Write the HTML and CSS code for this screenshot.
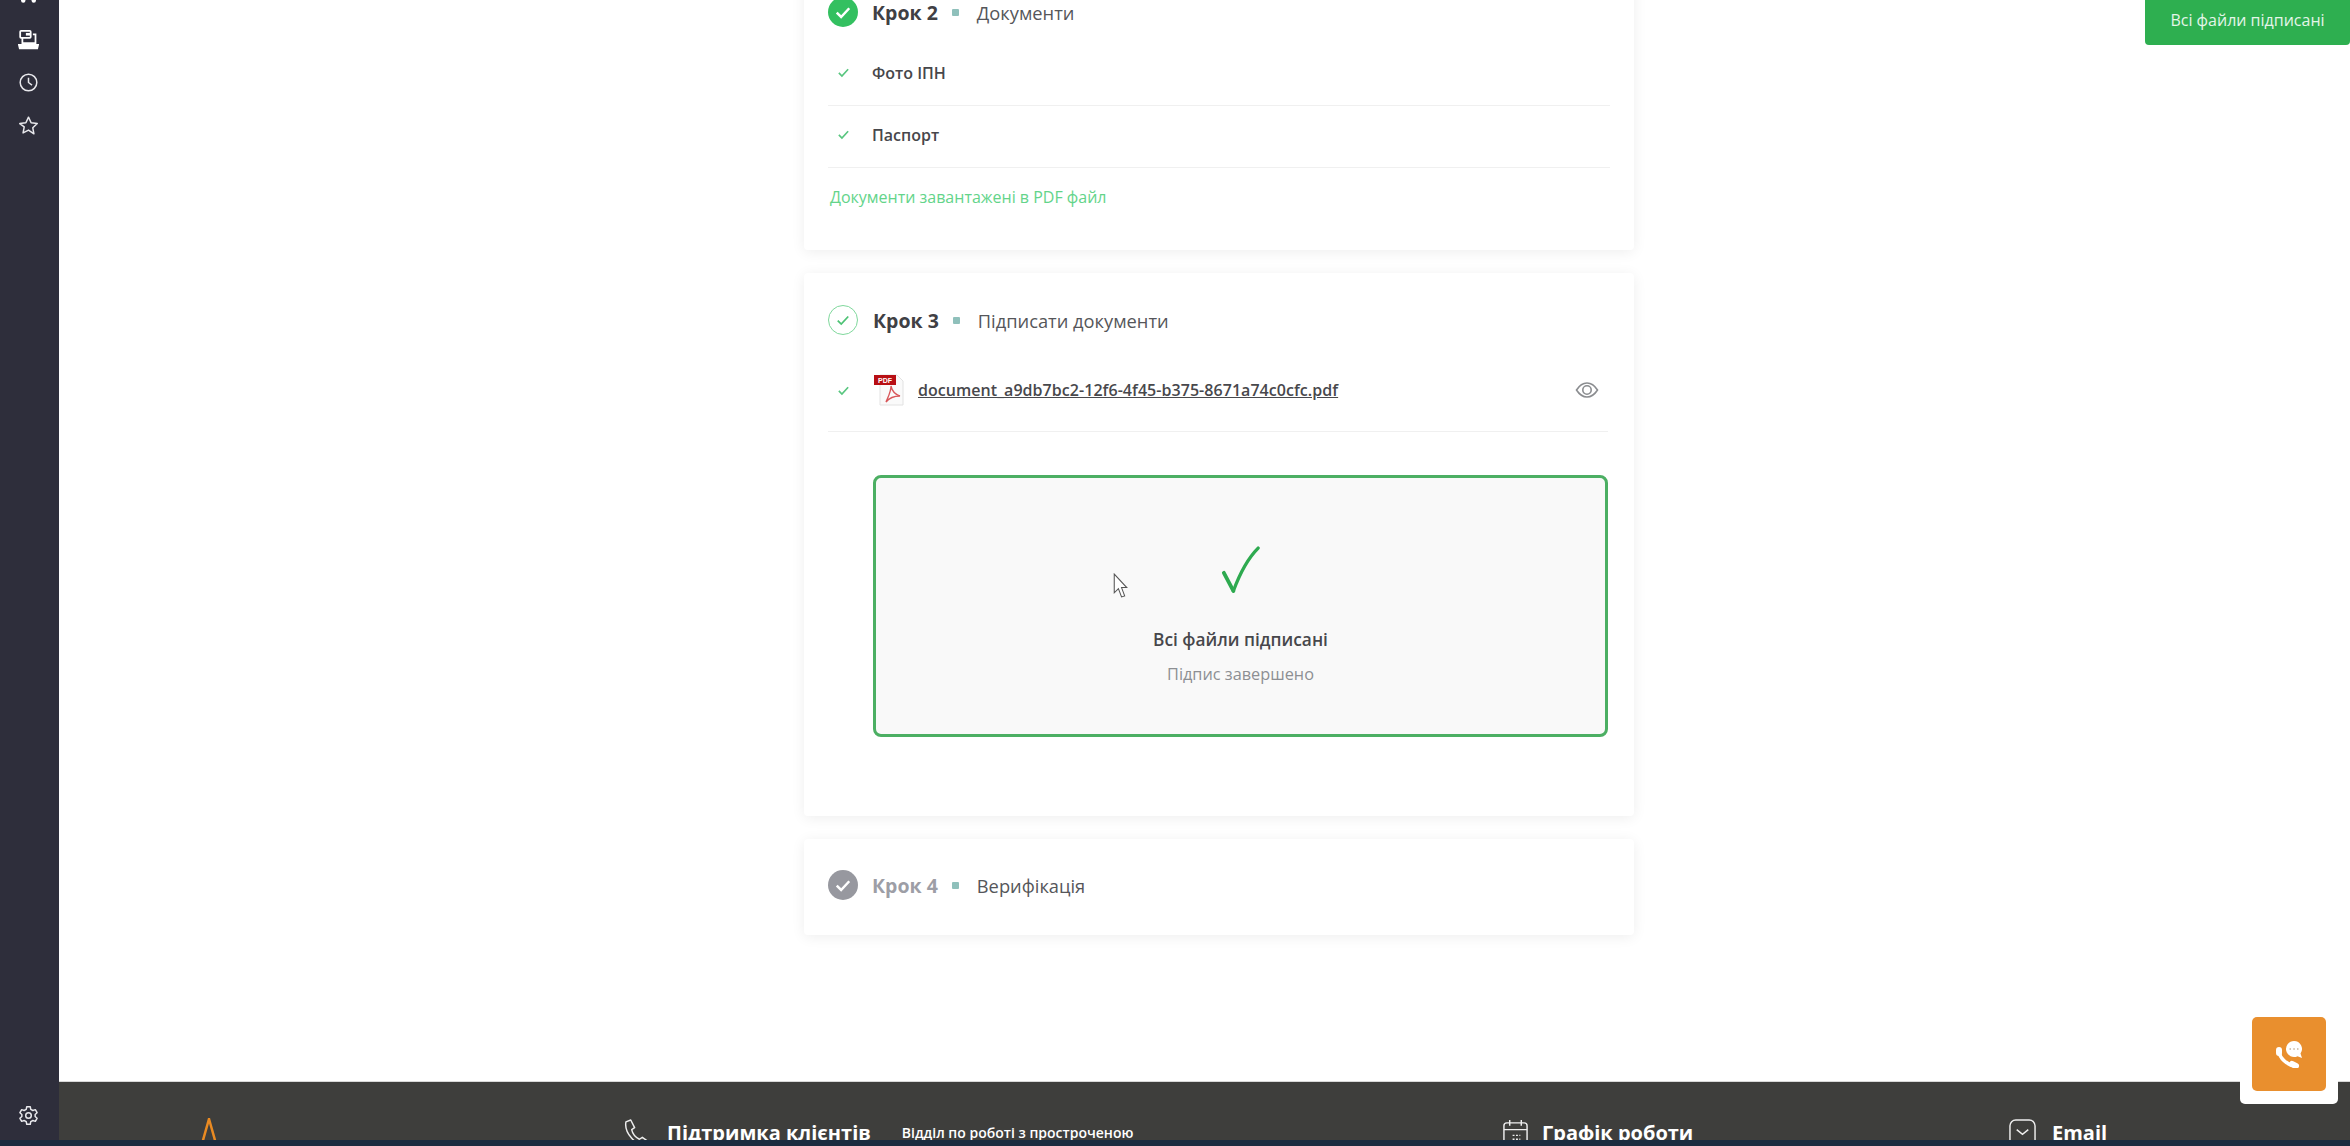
FILE: index.html
```html
<!DOCTYPE html>
<html lang="uk">
<head>
    <meta charset="UTF-8">
    <title>Підписання документів</title>
    <link rel="stylesheet" href="styles.css">
</head>
<body>
    <div class="app">
        <aside class="sidebar">
            <div class="side-top">
                <svg class="side-icon" viewBox="0 0 24 24" fill="#fff"><circle cx="6" cy="16.500" r="2.500"/><circle cx="18" cy="16.500" r="2.500"/></svg>
                <svg class="side-icon" viewBox="0 0 24 24" fill="none" stroke="#fff" stroke-width="2"><rect x="2.500" y="2" width="12" height="8" rx="1"/><path d="M9 6h5" stroke-width="3"/><path d="M17 6h3v10H5v-6"/><path d="M1 18h22l-1 4H2z" fill="#fff"/></svg>
                <svg class="side-icon" viewBox="0 0 24 24" fill="none" stroke="#e8e8ec" stroke-width="1.700"><circle cx="12" cy="12" r="9.500"/><path d="M12 6.500V12l4 3"/></svg>
                <svg class="side-icon" viewBox="0 0 24 24" fill="none" stroke="#e8e8ec" stroke-width="1.700" stroke-linejoin="round"><path d="M12 2.500l3 6.400 7 .9-5.100 4.800 1.300 6.900L12 17.200l-6.200 3.300 1.300-6.900L2 9.800l7-.9z"/></svg>
            </div>
            <svg class="side-icon side-gear" viewBox="0 0 24 24" fill="none" stroke="#e8e8ec" stroke-width="1.700" stroke-linejoin="round"><circle cx="12" cy="12" r="3.200"/><path d="M10 2h4l.6 3 2.400 1.300 2.800-1 2 3.500-2.200 2v2.400l2.200 2-2 3.500-2.800-1L14.600 19 14 22h-4l-.6-3L7 17.700l-2.800 1-2-3.500 2.200-2v-2.400l-2.200-2 2-3.500 2.800 1L9.400 5z"/></svg>
        </aside>

        <div class="content">
            <main class="steps">
                <section class="card card-docs">
                    <div class="step-head">
                        <span class="step-icon step-done"><svg viewBox="0 0 24 24"><path d="M7 12.500l3.500 3.500L17 9"/></svg></span>
                        <b class="step-name">Крок 2</b>
                        <i class="step-dot"></i>
                        <span class="step-title">Документи</span>
                    </div>
                    <div class="doc-row">
                        <svg class="tick" viewBox="0 0 14 14"><path d="M2 7.500l3.300 3.300L12 3.500"/></svg>
                        <b class="doc-name">Фото ІПН</b>
                    </div>
                    <div class="doc-row">
                        <svg class="tick" viewBox="0 0 14 14"><path d="M2 7.500l3.300 3.300L12 3.500"/></svg>
                        <b class="doc-name">Паспорт</b>
                    </div>
                    <p class="docs-note">Документи завантажені в PDF файл</p>
                </section>

                <section class="card card-sign">
                    <div class="step-head">
                        <span class="step-icon step-current"><svg viewBox="0 0 24 24"><path d="M7.500 12.500l3 3L16.500 9"/></svg></span>
                        <b class="step-name">Крок 3</b>
                        <i class="step-dot"></i>
                        <span class="step-title">Підписати документи</span>
                    </div>
                    <div class="file-row">
                        <svg class="tick" viewBox="0 0 14 14"><path d="M2 7.500l3.300 3.300L12 3.500"/></svg>
                        <svg class="pdf-icon" viewBox="0 0 32 32">
                            <path d="M7 1h17l6 6v24H7z" fill="#fafafa" stroke="#e2e2e2"/>
                            <rect x="1" y="1" width="22" height="10" fill="#b80f14"/>
                            <text x="12" y="9" class="pdf-label">PDF</text>
                            <path d="M18 12c1 5 3 8 9 10-5 0-10 1-14 6 2-5 5-10 5-16z" fill="none" stroke="#d8575a" stroke-width="1.300"/>
                        </svg>
                        <a class="file-link" href="#">document_a9db7bc2-12f6-4f45-b375-8671a74c0cfc.pdf</a>
                        <svg class="eye-icon" viewBox="0 0 24 24" fill="none" stroke="#8b8d90" stroke-width="1.600"><path d="M1.500 12C5 6.500 8.500 5 12 5s7 1.500 10.500 7C19 17.500 15.500 19 12 19s-7-1.500-10.500-7z"/><circle cx="12" cy="12" r="4.200"/></svg>
                    </div>
                    <div class="signed-box">
                        <svg class="signed-check" viewBox="0 0 42 50" fill="none" stroke="#2eaa50" stroke-linecap="round" stroke-linejoin="round"><path d="M3 28l10 19" stroke-width="4"/><path d="M13 47C20 28 28 13 39 2" stroke-width="3.500"/></svg>
                        <h3 class="signed-title">Всі файли підписані</h3>
                        <p class="signed-note">Підпис завершено</p>
                    </div>
                </section>

                <section class="card card-verify">
                    <div class="step-head">
                        <span class="step-icon step-todo"><svg viewBox="0 0 24 24"><path d="M7 12.500l3.500 3.500L17 9"/></svg></span>
                        <b class="step-name step-name-muted">Крок 4</b>
                        <i class="step-dot"></i>
                        <span class="step-title">Верифікація</span>
                    </div>
                </section>
            </main>

            <footer class="footer">
                <svg class="footer-logo" viewBox="0 0 16 24" fill="none" stroke="#e98a22" stroke-width="2.500"><path d="M1.500 24L8 1l6.500 23"/></svg>
                <div class="footer-col">
                    <svg class="footer-icon" viewBox="0 0 28 28" fill="none" stroke="#eee" stroke-width="1.500" stroke-linejoin="round"><path d="M2 3l5-2 4 8-3 2c1 5 4 8 8 10l3-2 7 5-3 3C12 28 0 14 2 3z"/></svg>
                    <b class="footer-head">Підтримка клієнтів</b>
                    <span class="footer-text">Відділ по роботі з простроченою</span>
                </div>
                <div class="footer-col footer-col-shift">
                    <svg class="footer-icon" viewBox="0 0 28 28" fill="none" stroke="#eee" stroke-width="1.500"><rect x="2" y="4" width="24" height="24" rx="3"/><path d="M2 11h24M8 1v6M20 1v6"/><path d="M11 17h8M11 21h8" stroke-dasharray="2 1.500"/></svg>
                    <b class="footer-head">Графік роботи</b>
                </div>
                <div class="footer-col">
                    <svg class="footer-icon" viewBox="0 0 28 28" fill="none" stroke="#eee" stroke-width="1.500"><rect x="1" y="1" width="26" height="28" rx="6"/><path d="M8 11l6 5 6-5"/></svg>
                    <b class="footer-head">Email</b>
                </div>
            </footer>
        </div>
    </div>
    <div class="taskbar"></div>

    <div class="signed-badge">Всі файли підписані</div>
    <div class="call-wrap">
        <button class="call-btn">
            <svg viewBox="0 0 28 28" width="28" height="28" fill="none"><path d="M4 12c1 6 7 12 15 14" stroke="#fff" stroke-width="3.500"/><path d="M4 10v3M17 24l4 2" stroke="#fff" stroke-width="6" stroke-linecap="round"/><path d="M19 1a8 8 0 0 1 6.500 12.600L27 18l-4.500-1.800A8 8 0 1 1 19 1z" fill="#fff"/><path d="M14.500 9H16M18.300 9h1.500M22 9h1.500" stroke="#c9b49b" stroke-width="1.500"/></svg>
        </button>
    </div>
    <svg class="cursor" viewBox="0 0 14 24"><path d="M1 1v18l4-4 3 8 3-1-3-8h5z" fill="#fff" stroke="#555"/></svg>
</body>
</html>
```
FILE: styles.css
```css
html, body {
    margin: 0;
    height: 100%;
    overflow: hidden;
}

body {
    font-family: "Open Sans", sans-serif;
    color: #3f3f42;
    background: #fff;
    display: flex;
    flex-direction: column;
}

.app {
    display: flex;
    flex: 1;
    min-height: 0;
}

.taskbar {
    height: 6px;
    background: #1c2b3f;
}

/* sidebar */
.sidebar {
    width: 59px;
    background: #2e2e3b;
    display: flex;
    flex-direction: column;
    justify-content: space-between;
    align-items: center;
    padding-bottom: 14px;
    box-sizing: border-box;
}

.side-top {
    display: flex;
    flex-direction: column;
    align-items: center;
    gap: 22px;
    margin-top: -14px;
}

.side-icon {
    width: 21px;
    height: 21px;
    display: block;
    margin-right: 2px;
}

/* steps */
.content {
    flex: 1;
    min-width: 0;
    display: flex;
    flex-direction: column;
    overflow: hidden;
}

.steps {
    flex: 1;
    padding-left: 745px;
    display: flex;
    flex-direction: column;
    gap: 23px;
}

.card {
    width: 830px;
    box-sizing: border-box;
    background: #fff;
    padding: 0 26px 0 24px;
    border-radius: 4px;
    box-shadow: 0 2px 14px rgba(0, 0, 0, 0.07);
}

.card-docs {
    margin-top: -20px;
    padding-top: 17px;
    padding-right: 24px;
    height: 270px;
}

.card-sign {
    padding-top: 32px;
    height: 543px;
}

.card-verify {
    padding-top: 31px;
    height: 96px;
}

.step-head {
    display: flex;
    align-items: center;
    height: 30px;
}

.step-icon {
    width: 30px;
    height: 30px;
    border-radius: 50%;
    box-sizing: border-box;
    flex-shrink: 0;
    margin-right: 15px;
}

.card-docs .step-icon, .card-verify .step-icon {
    margin-right: 14px;
}

.step-icon svg {
    display: block;
    width: 100%;
    height: 100%;
    fill: none;
    stroke: #fff;
    stroke-width: 2;
}

.step-done {
    background: #33c060;
}

.step-current {
    border: 1.500px solid #7fd89c;
}

.step-current svg {
    stroke: #4cc274;
    stroke-width: 1.500;
}

.step-todo {
    background: #97989f;
}

.step-name {
    font-size: 19.500px;
    font-weight: 700;
    color: #404044;
}

.step-name-muted {
    color: #9d9ea6;
}

.step-dot {
    width: 7px;
    height: 7px;
    margin: 0 18px 0 14px;
    background: #8fc0bb;
    border-radius: 1px;
}

.step-title {
    font-size: 18.300px;
    color: #55565a;
}

.card-docs .step-head {
    margin-bottom: 17px;
}

.doc-row {
    display: flex;
    align-items: center;
    height: 62px;
    box-sizing: border-box;
    padding-bottom: 4px;
    border-bottom: 1px solid #f0f0f0;
}

.tick {
    width: 13px;
    height: 13px;
    margin-left: 9px;
    margin-right: 23px;
    flex-shrink: 0;
    fill: none;
    stroke: #58c67f;
    stroke-width: 1.800;
}

.doc-row .tick {
    margin-right: 22px;
}

.doc-name {
    font-size: 16px;
    font-weight: 600;
    color: #47474b;
}

.docs-note {
    margin: 18px 0 0 2px;
    font-size: 16px;
    line-height: 22px;
    color: #63d48a;
}

.file-row {
    display: flex;
    align-items: center;
    height: 83px;
    box-sizing: border-box;
    margin-top: 14px;
    border-bottom: 1px solid #f0f0f0;
}

.pdf-icon {
    width: 32px;
    height: 32px;
    margin-right: 13px;
    flex-shrink: 0;
}

.pdf-label {
    font-family: "Liberation Sans", sans-serif;
    font-size: 7px;
    font-weight: 700;
    fill: #fff;
    text-anchor: middle;
}

.file-link {
    font-size: 16px;
    font-weight: 600;
    color: #48484c;
    letter-spacing: 0.05px;
}

.eye-icon {
    width: 24px;
    height: 24px;
    margin-left: auto;
    margin-right: 9px;
}

.signed-box {
    margin: 43px 0 0 45px;
    height: 262px;
    box-sizing: border-box;
    border: 3px solid #4caf63;
    border-radius: 8px;
    background: #f9f9f9;
    display: flex;
    flex-direction: column;
    align-items: center;
    padding-top: 68px;
}

.signed-check {
    width: 40px;
    height: 48px;
    display: block;
}

.signed-title {
    margin: 34px 0 0;
    font-size: 17.300px;
    line-height: 24px;
    font-weight: 600;
    color: #47474b;
}

.signed-note {
    margin: 10px 0 0;
    font-size: 16.300px;
    line-height: 24px;
    color: #8d8f93;
}

/* footer */
.footer {
    height: 59px;
    flex-shrink: 0;
    background: #3e3e3c;
    display: grid;
    grid-template-columns: 424px 876px 509px 1fr;
    padding-left: 141px;
    overflow: hidden;
    border-top: 1px solid #d8d8d8;
    box-sizing: border-box;
    align-items: start;
    color: #fff;
}

.footer-logo {
    width: 18px;
    height: 24px;
    margin-top: 36px;
    display: block;
}

.footer-col {
    display: flex;
    align-items: flex-start;
    padding-top: 37px;
}

.footer-icon {
    width: 27px;
    height: 27px;
    margin-right: 16px;
    flex-shrink: 0;
}

.footer-col-shift .footer-icon {
    margin-left: 2px;
    margin-right: 13px;
}

.footer-head {
    font-size: 20px;
    line-height: 27px;
    font-weight: 700;
}

.footer-text {
    margin-left: 31px;
    font-size: 14px;
    line-height: 27px;
    font-weight: 600;
    white-space: nowrap;
}

/* things lying over the page */
.signed-badge {
    position: absolute;
    top: 0;
    right: 0;
    width: 205px;
    height: 45px;
    line-height: 40px;
    text-align: center;
    font-size: 16px;
    color: #e4f5e8;
    background: #2eaf50;
    border-radius: 0 0 4px 4px;
}

.call-wrap {
    position: absolute;
    right: 12px;
    top: 1004px;
    padding: 13px 12px;
    background: #fff;
    border-radius: 0 0 5px 5px;
    display: flex;
}

.call-btn {
    width: 74px;
    height: 74px;
    padding: 0;
    border: none;
    border-radius: 5px;
    background: #e98f2e;
    display: flex;
    align-items: center;
    justify-content: center;
}

.cursor {
    position: absolute;
    left: 1113px;
    top: 573px;
    width: 15px;
    height: 25px;
}
```
